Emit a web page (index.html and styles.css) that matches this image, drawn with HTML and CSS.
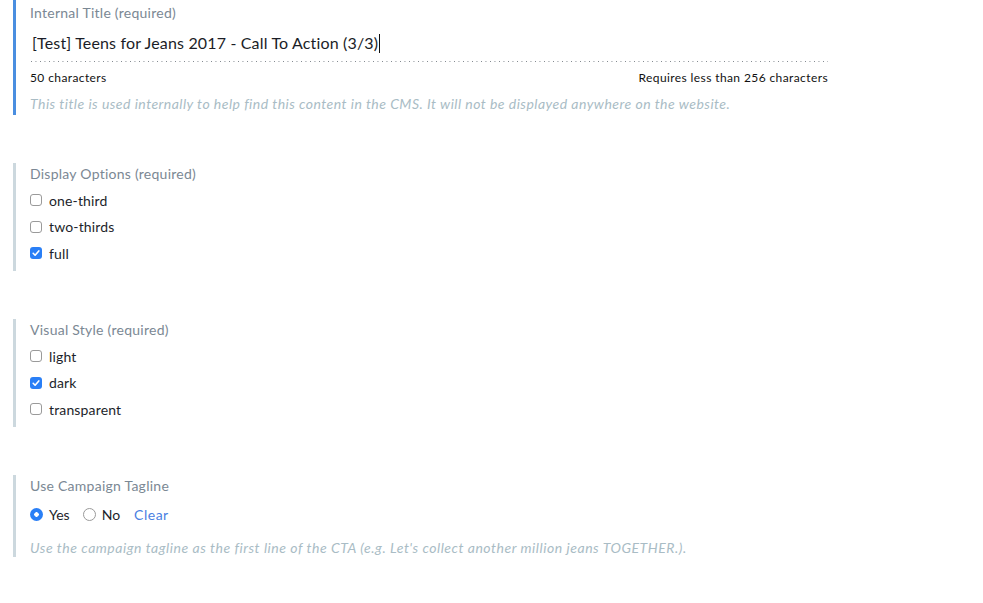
FILE: index.html
```html
<!DOCTYPE html>
<html>
<head>
<meta charset="utf-8">
<link rel="stylesheet" href="styles.css">
</head>
<body>
<div class="form">
  <section class="field field-active field-title">
    <div class="label">Internal Title (required)</div>
    <div class="input-wrap"><span class="input-text">[Test] Teens for Jeans 2017 - Call To Action (3/3)</span><span class="caret"></span></div>
    <div class="counter"><span>50 characters</span><span>Requires less than 256 characters</span></div>
    <div class="help">This title is used internally to help find this content in the CMS. It will not be displayed anywhere on the website.</div>
  </section>

  <section class="field">
    <div class="label">Display Options (required)</div>
    <div class="options">
      <div class="option"><span class="check"></span><span>one-third</span></div>
      <div class="option"><span class="check"></span><span>two-thirds</span></div>
      <div class="option"><span class="check checked"><svg viewBox="0 0 12 12" width="12" height="12"><path d="M3.2 6.3 L5.1 8.2 L8.8 3.9" fill="none" stroke="#fff" stroke-width="1.6" stroke-linecap="round" stroke-linejoin="round"/></svg></span><span>full</span></div>
    </div>
  </section>

  <section class="field">
    <div class="label">Visual Style (required)</div>
    <div class="options">
      <div class="option"><span class="check"></span><span>light</span></div>
      <div class="option"><span class="check checked"><svg viewBox="0 0 12 12" width="12" height="12"><path d="M3.2 6.3 L5.1 8.2 L8.8 3.9" fill="none" stroke="#fff" stroke-width="1.6" stroke-linecap="round" stroke-linejoin="round"/></svg></span><span>dark</span></div>
      <div class="option"><span class="check"></span><span>transparent</span></div>
    </div>
  </section>

  <section class="field field-radio">
    <div class="label">Use Campaign Tagline</div>
    <div class="radios">
      <span class="radio checked"></span><span class="radio-label">Yes</span>
      <span class="radio"></span><span class="radio-label">No</span>
      <a class="clear">Clear</a>
    </div>
    <div class="help">Use the campaign tagline as the first line of the CTA (e.g. Let's collect another million jeans TOGETHER.).</div>
  </section>
</div>
</body>
</html>
```

FILE: styles.css
```css
html, body {
  margin: 0;
  padding: 0;
  background: #ffffff;
}
body {
  font-family: Lato, "Open Sans", sans-serif;
  color: #1d1f2b;
  width: 983px;
  height: 603px;
  overflow: hidden;
}
.field {
  margin-left: 13px;
  margin-top: 48px;
  border-left: 3px solid #ccd8de;
  padding: 1px 0 4.5px 14px;
  width: 798px;
}
.field-title {
  margin-top: 0;
  border-left-color: #4a8ee0;
  padding-top: 3px;
  padding-bottom: 1px;
}
.label {
  font-size: 14px;
  line-height: 20px;
  color: #7b8894;
  letter-spacing: 0.25px;
}
.input-wrap {
  margin-top: 8px;
  height: 31px;
  box-sizing: border-box;
  padding-bottom: 7px;
  display: flex;
  align-items: center;
  background-image: linear-gradient(to right, #7d838a 1px, transparent 1px);
  background-size: 4.5px 1px;
  background-repeat: repeat-x;
  background-position: 1px bottom;
}
.input-text {
  font-size: 16px;
  line-height: 24px;
  color: #1b1d27;
  padding-left: 2px;
  letter-spacing: 0.16px;
}
.caret {
  display: inline-block;
  width: 1px;
  height: 19px;
  background: #111;
  margin-left: 1px;
}
.counter {
  margin-top: 8px;
  display: flex;
  justify-content: space-between;
  font-size: 12px;
  line-height: 16px;
  color: #111;
  letter-spacing: 0.4px;
}
.help {
  margin-top: 8px;
  font-size: 14px;
  line-height: 20px;
  font-style: italic;
  color: #a9bcc5;
  letter-spacing: 0.47px;
}
.options {
  margin-top: 3px;
}
.option {
  height: 26.5px;
  display: flex;
  align-items: center;
  font-size: 14px;
  color: #1d1f2b;
  letter-spacing: 0.15px;
}
.check {
  width: 12px;
  height: 12px;
  box-sizing: border-box;
  border: 1px solid #9a9a9a;
  border-radius: 3px;
  margin-right: 7px;
  background: #fff;
  display: flex;
  align-items: center;
  justify-content: center;
}
.check.checked {
  border: none;
  background: #2a7ff6;
}
.check svg {
  display: block;
}
.field-radio {
  padding-bottom: 0;
}
.radios {
  margin-top: 5px;
  height: 26px;
  display: flex;
  align-items: center;
  font-size: 14px;
  color: #1d1f2b;
}
.radio {
  width: 13px;
  height: 13px;
  box-sizing: border-box;
  border: 1px solid #9a9a9a;
  border-radius: 50%;
  margin-right: 6px;
  background: #fff;
}
.radio.checked {
  border: none;
  background: radial-gradient(circle, #ffffff 0 2px, #2a7ff6 2.5px);
}
.radio-label {
  margin-right: 13px;
}
.clear {
  margin-left: 1px;
  color: #4a80e2;
  cursor: pointer;
  letter-spacing: 0.5px;
}
.field-radio .help {
  margin-top: 12px;
  line-height: 18px;
  letter-spacing: 0.53px;
}
```
